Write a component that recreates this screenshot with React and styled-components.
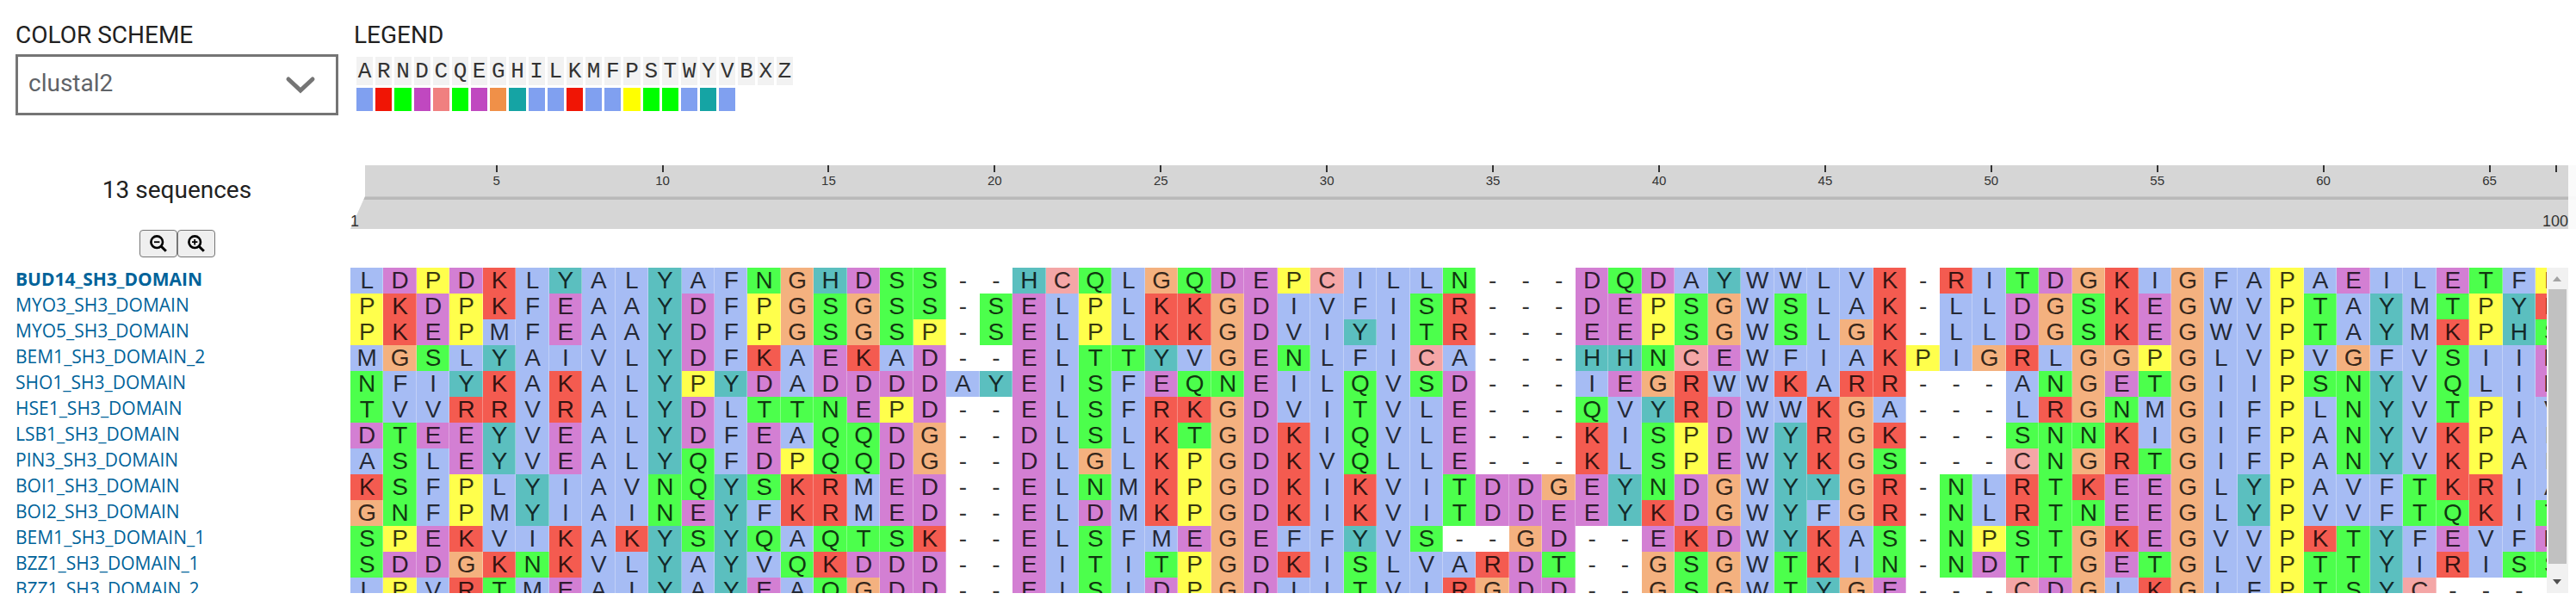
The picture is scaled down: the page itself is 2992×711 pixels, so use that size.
import React, { useState } from 'react';
import styled, { createGlobalStyle, css } from 'styled-components';

const GlobalStyle = createGlobalStyle`
  *, *::before, *::after { box-sizing: border-box; }
  body {
    margin: 0;
    background: #fff;
    color: #212121;
    font-family: 'Open Sans', 'Liberation Sans', sans-serif;
  }
`;

const SCHEME = [
  ['A', '128, 160, 240'],
  ['R', '240, 21, 5'],
  ['N', '0, 255, 0'],
  ['D', '192, 72, 192'],
  ['C', '240, 128, 128'],
  ['Q', '0, 255, 0'],
  ['E', '192, 72, 192'],
  ['G', '240, 144, 72'],
  ['H', '21, 164, 164'],
  ['I', '128, 160, 240'],
  ['L', '128, 160, 240'],
  ['K', '240, 21, 5'],
  ['M', '128, 160, 240'],
  ['F', '128, 160, 240'],
  ['P', '255, 255, 0'],
  ['S', '0, 255, 0'],
  ['T', '0, 255, 0'],
  ['W', '128, 160, 240'],
  ['Y', '21, 164, 164'],
  ['V', '128, 160, 240'],
  ['B', null],
  ['X', null],
  ['Z', null],
];
const COLORS = Object.fromEntries(SCHEME);

const SEQUENCES = [
  ['BUD14_SH3_DOMAIN', 'LDPDKLYALYAFNGHDSS--HCQLGQDEPCILLN---DQDAYWWLVK-RITDGKIGFAPAEILETFP'],
  ['MYO3_SH3_DOMAIN', 'PKDPKFEAAYDFPGSGSS-SELPLKKGDIVFISR---DEPSGWSLAK-LLDGSKEGWVPTAYMTPYK'],
  ['MYO5_SH3_DOMAIN', 'PKEPMFEAAYDFPGSGSP-SELPLKKGDVIYITR---EEPSGWSLGK-LLDGSKEGWVPTAYMKPHS'],
  ['BEM1_SH3_DOMAIN_2', 'MGSLYAIVLYDFKAEKAD--ELTTYVGENLFICA---HHNCEWFIAKPIGRLGGPGLVPVGFVSIID'],
  ['SHO1_SH3_DOMAIN', 'NFIYKAKALYPYDADDDDAYEISFEQNEILQVSD---IEGRWWKARR---ANGETGIIPSNYVQLID'],
  ['HSE1_SH3_DOMAIN', 'TVVRRVRALYDLTTNEPD--ELSFRKGDVITVLE---QVYRDWWKGA---LRGNMGIFPLNYVTPIV'],
  ['LSB1_SH3_DOMAIN', 'DTEEYVEALYDFEAQQDG--DLSLKTGDKIQVLE---KISPDWYRGK---SNNKIGIFPANYVKPAF'],
  ['PIN3_SH3_DOMAIN', 'ASLEYVEALYQFDPQQDG--DLGLKPGDKVQLLE---KLSPEWYKGS---CNGRTGIFPANYVKPAF'],
  ['BOI1_SH3_DOMAIN', 'KSFPLYIAVNQYSKRMED--ELNMKPGDKIKVITDDGEYNDGWYYGR-NLRTKEEGLYPAVFTKRIA'],
  ['BOI2_SH3_DOMAIN', 'GNFPMYIAINEYFKRMED--ELDMKPGDKIKVITDDEEYKDGWYFGR-NLRTNEEGLYPVVFTQKIT'],
  ['BEM1_SH3_DOMAIN_1', 'SPEKVIKAKYSYQAQTSK--ELSFMEGEFFYVS--GD--EKDWYKAS-NPSTGKEGVVPKTYFEVFD'],
  ['BZZ1_SH3_DOMAIN_1', 'SDDGKNKVLYAYVQKDDD--EITITPGDKISLVARDT--GSGWTKIN-NDTTGETGLVPTTYIRISS'],
  ['BZZ1_SH3_DOMAIN_2', 'LPVRTMEAIYAYEAQGDD--EISIDPGDIITVIRGDD--GSGWTYGE---CDGLKGLFPTSYC----'],
];

const COLUMNS = 67;
const TICKS = Array.from({ length: COLUMNS }, (_, i) => i + 1).filter(
  (n) => n % 5 === 0 || n === COLUMNS,
);

const Page = styled.main`
  padding: 22px 0 22px 18px;
`;

const Controls = styled.section`
  display: grid;
  grid-template-columns: 375px 1fr;
  column-gap: 18px;
`;

const heading = css`
  display: block;
  margin: 0;
  font-family: Roboto, 'Liberation Sans', sans-serif;
  font-size: 28px;
  line-height: 38px;
  font-weight: 400;
`;

const FieldLabel = styled.label`
  ${heading}
  margin-bottom: 3px;
`;

const LegendTitle = styled.h2`
  ${heading}
  margin-bottom: 3px;
`;

const SelectBox = styled.div`
  position: relative;
`;

const Select = styled.select`
  display: block;
  width: 100%;
  height: 71px;
  padding: 0 60px 4px 12px;
  border: 3px solid #757575;
  border-radius: 0;
  appearance: none;
  background: #fff;
  color: #5f6368;
  font-family: Roboto, 'Liberation Sans', sans-serif;
  font-size: 28px;
`;

const Chevron = styled.svg`
  position: absolute;
  top: 24px;
  right: 26px;
  width: 36px;
  height: 22px;
  pointer-events: none;
`;

const LegendGrid = styled.div`
  display: grid;
  grid-template-columns: repeat(23, 1fr);
  gap: 3px;
  width: 507px;
  margin: 6px 0 0 3px;
`;

const LegendLetter = styled.span`
  height: 33px;
  background: #f2f2f2;
  color: #333;
  font-family: 'Liberation Mono', monospace;
  font-size: 26px;
  line-height: 34px;
  text-align: center;
`;

const Swatch = styled.span`
  height: 27px;
  background: ${({ $rgb }) => ($rgb ? `rgb(${$rgb})` : 'transparent')};
`;

const Viewer = styled.section`
  display: grid;
  grid-template-columns: 375px 1fr;
  column-gap: 14px;
  margin-top: 58px;
`;

const Sidebar = styled.div`
  display: flex;
  flex-direction: column;
`;

const Summary = styled.p`
  ${heading}
  margin: 10px 0 27px;
  text-align: center;
`;

const ZoomBar = styled.div`
  display: flex;
  justify-content: center;
  margin-bottom: 10px;
`;

const ZoomButton = styled.button`
  display: flex;
  align-items: center;
  justify-content: center;
  width: 44px;
  height: 32px;
  padding: 0;
  border: 1px solid #767676;
  border-radius: 4px;
  background: #efefef;
  color: #000;
`;

const Magnifier = styled.svg`
  width: 20px;
  height: 20px;
  fill: none;
  stroke: currentColor;
`;

const NameList = styled.ul`
  height: 380px;
  margin: 0;
  padding: 0;
  overflow: hidden;
  list-style: none;
`;

const NameLink = styled.a`
  display: block;
  color: #00639a;
  font-size: 21px;
  line-height: 30px;
  font-weight: ${({ $active }) => ($active ? 700 : 400)};
  text-decoration: none;
`;

const Tracks = styled.div`
  display: flex;
  flex-direction: column;
  min-width: 0;
`;

const RulerRow = styled.div`
  display: flex;
  height: 74px;
  margin-bottom: 45px;
`;

const Ruler = styled.div`
  position: relative;
  display: flex;
  flex-direction: column;
  flex: 1;
  min-width: 0;
  font-family: 'Liberation Sans', sans-serif;

  &::before {
    content: '';
    position: absolute;
    inset: 0;
    z-index: -1;
    background: linear-gradient(#d6d6d6 36px, #c6c6c6 36px 37px, #b9b9b9 37px 40px, #d6d6d6 40px);
    clip-path: polygon(17px 0, 100% 0, 100% 100%, 0 100%, 17px 36px);
  }
`;

const RulerEdge = styled.div`
  width: 9px;
  background: linear-gradient(#fafafa 36px, #f7f7f7 36px 40px, #fafafa 40px);
`;

const Scale = styled.div`
  display: grid;
  grid-template-columns: repeat(${COLUMNS}, 1fr);
  height: 40px;
  margin: 0 -5px 0 -4px;
`;

const Tick = styled.span`
  display: flex;
  flex-direction: column;
  align-items: center;
  grid-column: ${({ $at }) => $at};
  grid-row: 1;
  color: #333;
  font-size: 15px;
  line-height: 18px;

  &::before {
    content: '';
    width: 2px;
    height: 8px;
    margin-bottom: 1px;
    background: #333;
  }
`;

const Range = styled.div`
  display: flex;
  justify-content: space-between;
  margin-top: 16px;
  color: #333;
  font-size: 18px;
  line-height: 18px;
`;

const AlignmentRow = styled.div`
  display: flex;
  height: 378px;
  padding-right: 9px;
`;

const Alignment = styled.div`
  flex: 1;
  min-width: 0;
  overflow: hidden;
`;

const Sequence = styled.div`
  display: grid;
  grid-template-columns: repeat(${COLUMNS}, 1fr);
  width: 101%;
  height: 30px;
`;

const Residue = styled.span`
  background: ${({ $rgb }) => ($rgb ? `rgba(${$rgb}, 0.7)` : 'transparent')};
  box-shadow: inset -1px 0 rgba(255, 255, 255, 0.3);
  color: rgba(0, 0, 0, 0.8);
  font-family: 'Liberation Sans', sans-serif;
  font-size: 28px;
  line-height: 30px;
  text-align: center;
`;

const Scrollbar = styled.div`
  display: flex;
  flex-direction: column;
  width: 25px;
  background: #f1f1f1;
`;

const ScrollArrow = styled.svg`
  width: 25px;
  height: 25px;
`;

const Thumb = styled.div`
  height: 319px;
  margin: 0 2px 9px;
  background: #c1c1c1;
`;

export default function App() {
  const [scheme, setScheme] = useState('clustal2');

  return (
    <>
      <GlobalStyle />
      <Page>
        <Controls>
          <div>
            <FieldLabel htmlFor="scheme">COLOR SCHEME</FieldLabel>
            <SelectBox>
              <Select id="scheme" value={scheme} onChange={(e) => setScheme(e.target.value)}>
                <option value="clustal2">clustal2</option>
              </Select>
              <Chevron viewBox="0 0 36 22" fill="none" stroke="#757575" strokeWidth="5" strokeLinecap="round" aria-hidden="true">
                <path d="M4 5 L18 18 L32 5" />
              </Chevron>
            </SelectBox>
          </div>
          <div>
            <LegendTitle>LEGEND</LegendTitle>
            <LegendGrid>
              {SCHEME.map(([letter]) => (
                <LegendLetter key={letter}>{letter}</LegendLetter>
              ))}
              {SCHEME.map(([letter, rgb]) => (
                <Swatch key={letter} $rgb={rgb} />
              ))}
            </LegendGrid>
          </div>
        </Controls>

        <Viewer>
          <Sidebar>
            <Summary>13 sequences</Summary>
            <ZoomBar>
              <ZoomButton type="button" aria-label="Zoom out">
                <Magnifier viewBox="0 0 20 20" aria-hidden="true">
                  <circle cx="8.2" cy="8.2" r="6.8" strokeWidth="2.6" />
                  <path d="M13 13 L18.8 18.8" strokeWidth="3" />
                  <path d="M5 8.2 H11.4" strokeWidth="1.8" />
                </Magnifier>
              </ZoomButton>
              <ZoomButton type="button" aria-label="Zoom in">
                <Magnifier viewBox="0 0 20 20" aria-hidden="true">
                  <circle cx="8.2" cy="8.2" r="6.8" strokeWidth="2.6" />
                  <path d="M13 13 L18.8 18.8" strokeWidth="3" />
                  <path d="M5 8.2 H11.4 M8.2 5 V11.4" strokeWidth="1.8" />
                </Magnifier>
              </ZoomButton>
            </ZoomBar>
            <NameList>
              {SEQUENCES.map(([name], i) => (
                <li key={name}>
                  <NameLink href={`#${name}`} $active={i === 0}>
                    {name}
                  </NameLink>
                </li>
              ))}
            </NameList>
          </Sidebar>

          <Tracks>
            <RulerRow>
              <Ruler>
                <Scale>
                  {TICKS.map((n) => (
                    <Tick key={n} $at={n}>
                      {n % 5 === 0 ? n : null}
                    </Tick>
                  ))}
                </Scale>
                <Range>
                  <span>1</span>
                  <span>100</span>
                </Range>
              </Ruler>
              <RulerEdge />
            </RulerRow>
            <AlignmentRow>
              <Alignment>
                {SEQUENCES.map(([name, residues]) => (
                  <Sequence key={name}>
                    {[...residues].map((letter, i) => (
                      <Residue key={i} $rgb={COLORS[letter]}>
                        {letter}
                      </Residue>
                    ))}
                  </Sequence>
                ))}
              </Alignment>
              <Scrollbar>
                <ScrollArrow viewBox="0 0 25 25" aria-hidden="true">
                  <path d="M7 16 L12 10 L17 16 Z" fill="#a3a3a3" />
                </ScrollArrow>
                <Thumb />
                <ScrollArrow viewBox="0 0 25 25" aria-hidden="true">
                  <path d="M7 9 L12 15 L17 9 Z" fill="#505050" />
                </ScrollArrow>
              </Scrollbar>
            </AlignmentRow>
          </Tracks>
        </Viewer>
      </Page>
    </>
  );
}
